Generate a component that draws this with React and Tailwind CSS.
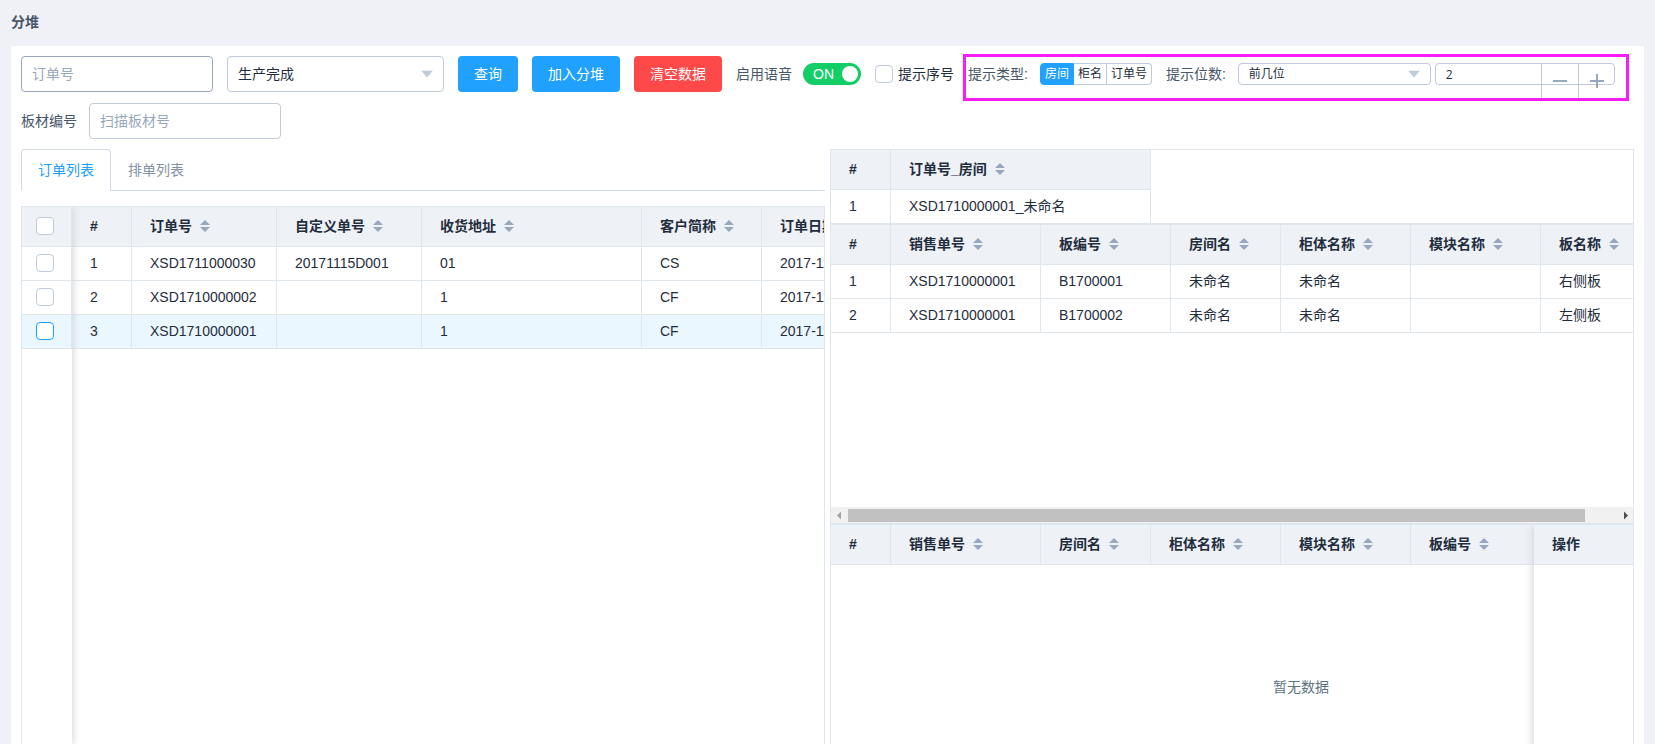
import React from "react";

const orders = [
  ["1", "XSD1711000030", "20171115D001", "01", "CS", "2017-11-15"],
  ["2", "XSD1710000002", "", "1", "CF", "2017-11-14"],
  ["3", "XSD1710000001", "", "1", "CF", "2017-11-14"],
];

const orderColumns = [
  { label: "#", width: 60 },
  { label: "订单号", width: 145, sortable: true },
  { label: "自定义单号", width: 145, sortable: true },
  { label: "收货地址", width: 220, sortable: true },
  { label: "客户简称", width: 120, sortable: true },
  { label: "订单日期", width: 150, sortable: true },
];

const roomColumns = [
  { label: "#", width: 60 },
  { label: "订单号_房间", width: 260, sortable: true },
];

const boardColumns = [
  { label: "#", width: 60 },
  { label: "销售单号", width: 150, sortable: true },
  { label: "板编号", width: 130, sortable: true },
  { label: "房间名", width: 110, sortable: true },
  { label: "柜体名称", width: 130, sortable: true },
  { label: "模块名称", width: 130, sortable: true },
  { label: "板名称", width: 160, sortable: true },
];

const boards = [
  ["1", "XSD1710000001", "B1700001", "未命名", "未命名", "", "右侧板"],
  ["2", "XSD1710000001", "B1700002", "未命名", "未命名", "", "左侧板"],
];

const scannedColumns = [
  { label: "#", width: 60 },
  { label: "销售单号", width: 150, sortable: true },
  { label: "房间名", width: 110, sortable: true },
  { label: "柜体名称", width: 130, sortable: true },
  { label: "模块名称", width: 130, sortable: true },
  { label: "板编号", width: 130, sortable: true },
  { label: "", width: 230 },
];

function SortCaret() {
  return (
    <svg className="ml-2 h-3 w-[10px] shrink-0 fill-[#97a8be]" viewBox="0 0 10 12" aria-hidden="true">
      <path d="M5 0 10 5H0Z" />
      <path d="M0 7h10L5 12Z" />
    </svg>
  );
}

function DropArrow() {
  return (
    <svg
      className="pointer-events-none absolute right-[11px] top-1/2 h-[7px] w-3 -translate-y-1/2 fill-[#bfcbd9]"
      viewBox="0 0 12 7"
      aria-hidden="true"
    >
      <path d="M0 0h12L6 7Z" />
    </svg>
  );
}

function HeaderCell({ label, sortable }) {
  return (
    <th className="h-10 border-r border-b border-[#dfe6ec] bg-[#eef1f6] p-0 pb-[2px] text-left font-bold">
      <div className="flex items-center pl-[18px] whitespace-nowrap">
        {label}
        {sortable && <SortCaret />}
      </div>
    </th>
  );
}

function DataTable({ columns, rows, activeRow }) {
  const total = columns.reduce((sum, c) => sum + c.width, 0);
  return (
    <table className="table-fixed border-separate border-spacing-0" style={{ width: total }}>
      <colgroup>
        {columns.map((c) => (
          <col key={c.label} style={{ width: c.width }} />
        ))}
      </colgroup>
      <thead>
        <tr>
          {columns.map((c) => (
            <HeaderCell key={c.label} {...c} />
          ))}
        </tr>
      </thead>
      <tbody>
        {rows.map((row, i) => (
          <tr key={row[0]} className={i === activeRow ? "bg-[#ebf7ff]" : "bg-white"}>
            {row.map((value, j) => (
              <td
                key={columns[j].label}
                className="h-[34px] border-r border-b border-[#dfe6ec] p-0 pb-[2px] pl-[18px] whitespace-nowrap"
              >
                {value}
              </td>
            ))}
          </tr>
        ))}
      </tbody>
    </table>
  );
}

function Checkbox({ active, ...props }) {
  return (
    <input
      type="checkbox"
      className={
        "block size-[18px] shrink-0 appearance-none rounded-[4px] border bg-white checked:bg-[#20a0ff] " +
        (active ? "border-[#20a0ff]" : "border-[#bfcbd9]")
      }
      {...props}
    />
  );
}

function Toolbar() {
  return (
    <form className="flex flex-col gap-[11px]" onSubmit={(e) => e.preventDefault()}>
      <div className="flex flex-wrap items-center gap-x-[14px] gap-y-3">
        <input
          type="text"
          aria-label="订单号"
          placeholder="订单号"
          className="h-9 w-48 rounded-[4px] border border-[#97a8be] px-[10px] placeholder:text-[#97a8be]"
        />
        <div className="relative">
          <select
            aria-label="订单状态"
            className="block h-9 w-[217px] appearance-none rounded-[4px] border border-[#bfcbd9] bg-white px-[10px]"
          >
            <option>生产完成</option>
          </select>
          <DropArrow />
        </div>
        <button type="button" className="h-9 rounded-[4px] bg-[#20a0ff] px-4 text-white">
          查询
        </button>
        <button type="button" className="h-9 rounded-[4px] bg-[#20a0ff] px-4 text-white">
          加入分堆
        </button>
        <button type="button" className="h-9 rounded-[4px] bg-[#ff4949] px-4 text-white">
          清空数据
        </button>
        <label className="flex items-center gap-[11px] text-[#475669]">
          启用语音
          <input type="checkbox" role="switch" defaultChecked className="peer sr-only" />
          <span className="flex h-[22px] w-[58px] items-center justify-between rounded-full bg-[#13ce66] pr-[3px] pl-[10px] text-white">
            ON
            <span className="size-4 rounded-full bg-white" />
          </span>
        </label>
        <label className="flex items-center gap-[5px]">
          <Checkbox />
          提示序号
        </label>

        <div className="relative flex h-9 items-center text-[#475669]">
          <fieldset className="flex items-center">
            <legend className="float-left mr-3">提示类型:</legend>
            <div className="flex h-[22px] text-xs leading-5 text-[#1f2d3d]">
              <label className="rounded-l-[4px] border border-[#20a0ff] bg-[#20a0ff] px-1 text-white">
                <input type="radio" name="hintType" defaultChecked className="sr-only" />
                房间
              </label>
              <label className="border-y border-r border-[#bfcbd9] px-1">
                <input type="radio" name="hintType" className="sr-only" />
                柜名
              </label>
              <label className="rounded-r-[4px] border-y border-r border-[#bfcbd9] px-1">
                <input type="radio" name="hintType" className="sr-only" />
                订单号
              </label>
            </div>
          </fieldset>
          <label htmlFor="hintDigits" className="mr-3 ml-[14px]">
            提示位数:
          </label>
          <div className="relative mr-1 text-xs text-[#1f2d3d]">
            <select
              id="hintDigits"
              className="block h-[22px] w-[193px] appearance-none rounded-[4px] border border-[#bfcbd9] bg-white px-[10px]"
            >
              <option>前几位</option>
            </select>
            <DropArrow />
          </div>
          <div className="relative">
            <input
              type="text"
              inputMode="numeric"
              aria-label="位数"
              defaultValue="2"
              className="block h-[22px] w-[180px] rounded-[4px] border border-[#bfcbd9] px-[10px] font-['Open_Sans',sans-serif] text-xs text-[#1f2d3d]"
            />
            <div className="absolute top-0 right-0 flex">
              <button
                type="button"
                aria-label="减少"
                className="flex h-9 w-[37px] items-center justify-center border-l border-[#bfcbd9]"
              >
                <svg className="size-[14px] stroke-[#97a8be]" viewBox="0 0 14 14" strokeWidth="2" aria-hidden="true">
                  <path d="M0 7h14" />
                </svg>
              </button>
              <button
                type="button"
                aria-label="增加"
                className="flex h-9 w-[37px] items-center justify-center border-l border-[#bfcbd9]"
              >
                <svg className="size-[14px] stroke-[#97a8be]" viewBox="0 0 14 14" strokeWidth="2" aria-hidden="true">
                  <path d="M0 7h14M7 0v14" />
                </svg>
              </button>
            </div>
          </div>
          <div className="pointer-events-none absolute -top-[2px] -right-[14px] -bottom-[9px] -left-[5px] border-3 border-[#f81cf8]" />
        </div>
      </div>

      <div className="flex items-center gap-3">
        <label htmlFor="boardNo" className="text-[#475669]">
          板材编号
        </label>
        <input
          id="boardNo"
          type="text"
          placeholder="扫描板材号"
          className="h-9 w-48 rounded-[4px] border border-[#bfcbd9] px-[10px] placeholder:text-[#97a8be]"
        />
      </div>
    </form>
  );
}

function OrderPane() {
  return (
    <section className="flex min-w-0 flex-1 flex-col">
      <div role="tablist" className="flex h-[42px] shrink-0 border-b border-[#d3dce6]">
        <button
          type="button"
          role="tab"
          aria-selected="true"
          className="h-[42px] rounded-t-[4px] border border-[#d3dce6] border-b-white bg-white px-4 text-[#20a0ff]"
        >
          订单列表
        </button>
        <button
          type="button"
          role="tab"
          aria-selected="false"
          className="h-[42px] border border-transparent px-4 text-[#8391a5]"
        >
          排单列表
        </button>
      </div>
      <div className="mt-[15px] flex min-h-0 flex-1 overflow-hidden border-x border-t border-[#dfe6ec]">
        <div className="z-10 w-[50px] shrink-0 bg-white shadow-[1px_0_8px_#d3d4d6]">
          <table className="w-full border-separate border-spacing-0">
            <thead>
              <tr>
                <th className="h-10 border-r border-b border-[#dfe6ec] bg-[#eef1f6] p-0 pb-[2px] pl-[14px]">
                  <Checkbox aria-label="全选" />
                </th>
              </tr>
            </thead>
            <tbody>
              {orders.map((row, i) => (
                <tr key={row[0]} className={i === 2 ? "bg-[#ebf7ff]" : "bg-white"}>
                  <td className="h-[34px] border-r border-b border-[#dfe6ec] p-0 pb-[2px] pl-[14px]">
                    <Checkbox aria-label={row[1]} active={i === 2} />
                  </td>
                </tr>
              ))}
            </tbody>
          </table>
        </div>
        <div className="min-w-0 flex-1 overflow-hidden">
          <DataTable columns={orderColumns} rows={orders} activeRow={2} />
        </div>
      </div>
    </section>
  );
}

function ScrollTrack() {
  return (
    <div className="flex h-4 shrink-0 items-center bg-[#f1f1f1]">
      <svg className="h-4 w-[17px] shrink-0 fill-[#a3a3a3]" viewBox="0 0 17 16" aria-hidden="true">
        <path d="M10 4.500v8L6 8.500Z" />
      </svg>
      <div className="flex-1">
        <div className="mt-px h-[13px] w-[96%] bg-[#c1c1c1]" />
      </div>
      <svg className="h-4 w-[17px] shrink-0 fill-[#505050]" viewBox="0 0 17 16" aria-hidden="true">
        <path d="M8 4.500v8l4-4Z" />
      </svg>
    </div>
  );
}

function BoardPane() {
  return (
    <section className="flex min-w-0 flex-1 flex-col">
      <div className="h-[75px] shrink-0 overflow-hidden border border-[#dfe6ec]">
        <DataTable columns={roomColumns} rows={[["1", "XSD1710000001_未命名"]]} />
      </div>
      <div className="flex h-[300px] shrink-0 flex-col border border-[#dfe6ec]">
        <div className="min-h-0 flex-1 overflow-hidden">
          <DataTable columns={boardColumns} rows={boards} />
        </div>
        <ScrollTrack />
      </div>
      <div className="flex h-[300px] shrink-0 overflow-hidden border border-[#dfe6ec]">
        <div className="min-w-0 flex-1 overflow-hidden">
          <DataTable columns={scannedColumns} rows={[]} />
          <p className="flex h-[244px] w-[940px] items-center justify-center text-[#5e7382]">暂无数据</p>
        </div>
        <div className="z-10 w-[99px] shrink-0 bg-white shadow-[-1px_0_8px_#d3d4d6]">
          <table className="w-full border-separate border-spacing-0">
            <thead>
              <tr>
                <th className="h-10 border-b border-[#dfe6ec] bg-[#eef1f6] p-0 pb-[2px] pl-[18px] text-left font-bold">
                  操作
                </th>
              </tr>
            </thead>
          </table>
        </div>
      </div>
    </section>
  );
}

export default function App() {
  return (
    <div className="flex h-screen flex-col overflow-hidden bg-[#eff1f7] px-[11px] font-['Liberation_Sans','Noto_Sans_CJK_SC',sans-serif] text-sm text-[#1f2d3d]">
      <h1 className="flex h-[46px] shrink-0 items-center pb-[2px] font-bold text-[#475669]">分堆</h1>
      <main className="flex min-h-0 flex-1 flex-col gap-[10px] bg-white px-[10px] pt-[10px]">
        <Toolbar />
        <div className="flex min-h-0 flex-1 gap-[5px] overflow-hidden">
          <OrderPane />
          <BoardPane />
        </div>
      </main>
    </div>
  );
}
